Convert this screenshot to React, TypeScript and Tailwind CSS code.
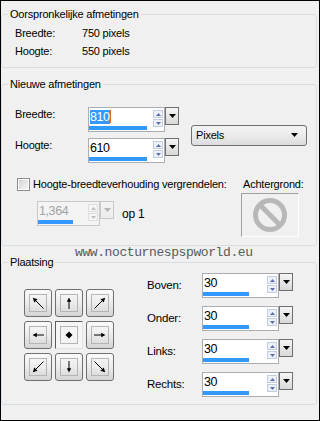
import type { ReactNode } from 'react';

function Tri({ up, color }: { up?: boolean; color: string }) {
  return (
    <svg width="5" height="3" viewBox="0 0 5 3">
      <path d={up ? 'M2.5 0L5 3H0Z' : 'M0 0H5L2.5 3Z'} fill={color} />
    </svg>
  );
}

function DropBtn({ disabled }: { disabled?: boolean }) {
  return (
    <div
      className={`flex h-[18px] w-[14px] items-center justify-center border bg-linear-to-b ${
        disabled ? 'border-[#c9c9c9] from-[#f4f4f4] to-[#ececec]' : 'border-[#6f6f6f] from-[#f6f6f6] to-[#d8d8d8]'
      }`}
    >
      <svg width="7" height="4" viewBox="0 0 7 4">
        <path d="M0 0H7L3.5 4Z" fill={disabled ? '#b5b5b5' : '#000'} />
      </svg>
    </div>
  );
}

function SpinBox({
  value,
  bar,
  w = 'w-[77px]',
  selected,
  disabled,
}: {
  value: string;
  bar: number;
  w?: string;
  selected?: boolean;
  disabled?: boolean;
}) {
  const arrow = disabled ? 'border-[#dedede] bg-[#f6f6f6]' : 'border-[#c3cde0] bg-[#eef1f8]';
  const tri = disabled ? '#c0c0c0' : '#5a6fae';
  return (
    <div className="flex items-start">
      <div className={`flex h-[25px] ${w} border ${disabled ? 'border-[#c9c9c9] bg-[#f4f4f4]' : 'border-[#abadb3] bg-white'}`}>
        <div className="flex flex-1 flex-col">
          <div className={`flex-1 pl-[1px] pt-[2px] text-[12.5px] leading-[14px] tracking-[-0.4px] ${disabled ? 'text-[#a3a3a3]' : 'text-black'}`}>
            {selected ? (
              <>
                <span className="bg-[#3399ff] text-white">{value}</span>
                <span className="inline-block h-[13px] w-[1px] bg-[#e07020] align-top" />
              </>
            ) : (
              value
            )}
          </div>
          <div className="mb-[1px] h-[4px] bg-[#3399ff]" style={{ width: bar }} />
        </div>
        <div className="flex flex-col gap-[1px] pr-[1px] pt-[2px]">
          <div className={`flex h-[8px] w-[10px] items-center justify-center border ${arrow}`}>
            <Tri up color={tri} />
          </div>
          <div className={`flex h-[8px] w-[10px] items-center justify-center border ${arrow}`}>
            <Tri color={tri} />
          </div>
        </div>
      </div>
      <DropBtn disabled={disabled} />
    </div>
  );
}

function Group({ title, className, children }: { title: string; className: string; children: ReactNode }) {
  return (
    <fieldset className={`w-[316px] rounded-[3px] border border-[#d5dfe5] ${className}`}>
      <legend className="ml-[6px] px-[2px] leading-[14px]">{title}</legend>
      {children}
    </fieldset>
  );
}

function Straight() {
  return (
    <svg width="14" height="14" viewBox="0 0 14 14">
      <path d="M7 13V5" stroke="#000" strokeWidth="1" />
      <path d="M7 1.5L4.8 5.8H9.2Z" fill="#000" />
    </svg>
  );
}

function Diagonal() {
  return (
    <svg width="14" height="14" viewBox="0 0 14 14">
      <path d="M12.5 12.5L4.5 4.5" stroke="#000" strokeWidth="1" />
      <path d="M1.8 1.8L6.6 3.3L3.3 6.6Z" fill="#000" />
    </svg>
  );
}

function DirBtn({ icon, rot }: { icon: 'straight' | 'diag'; rot: string }) {
  return (
    <div className="flex h-[28px] w-[28px] items-center justify-center rounded-[3px] border border-[#707070] bg-linear-to-b from-[#fbfbfb] via-[#ececec] to-[#d4d4d4]">
      <div className="flex h-[18px] w-[18px] items-center justify-center border border-[#b5b5b5]">
        <div className={rot}>{icon === 'straight' ? <Straight /> : <Diagonal />}</div>
      </div>
    </div>
  );
}

export default function App() {
  return (
    <div className="relative h-[421px] w-[320px] overflow-hidden border border-black bg-[#f0f0f0] font-['Liberation_Sans',Arial,sans-serif] text-[11px] tracking-[-0.2px] text-black">
      <Group title="Oorspronkelijke afmetingen" className="mt-[6px]">
        <div className="pb-[7px] pl-[13px] pt-[3px]">
          <div className="flex h-[18px] items-center">
            <span className="w-[67px]">Breedte:</span>
            <span>750 pixels</span>
          </div>
          <div className="flex h-[18px] items-center">
            <span className="w-[67px]">Hoogte:</span>
            <span>550 pixels</span>
          </div>
        </div>
      </Group>

      <Group title="Nieuwe afmetingen" className="mt-[9px]">
        <div className="pb-[8px]">
          <div className="mt-[16px] flex items-center">
            <div className="flex w-[189px] flex-col gap-[6px] pl-[13px]">
              <div className="flex items-start">
                <span className="w-[73px] leading-[14px]">Breedte:</span>
                <SpinBox value="810" bar={58} selected />
              </div>
              <div className="flex items-start">
                <span className="w-[73px] leading-[14px]">Hoogte:</span>
                <SpinBox value="610" bar={58} />
              </div>
            </div>
            <div className="flex h-[21px] w-[116px] items-center justify-between rounded-[3px] border border-[#707070] bg-linear-to-b from-[#f4f4f4] via-[#ebebeb] to-[#dcdcdc] pl-[4px] pr-[8px]">
              <span>Pixels</span>
              <svg width="7" height="4" viewBox="0 0 7 4">
                <path d="M0 0H7L3.5 4Z" fill="#000" />
              </svg>
            </div>
          </div>

          <div className="mt-[14px] flex h-[14px] items-center whitespace-nowrap">
            <div className="flex w-[241px] items-center pl-[15px]">
              <div className="h-[13px] w-[13px] border border-[#8e8f8f] bg-white p-[1px]">
                <div className="h-full w-full bg-linear-to-br from-[#d4d4d4] to-[#f6f6f6]" />
              </div>
              <span className="ml-[3px]">Hoogte-breedteverhouding vergrendelen:</span>
            </div>
            <span>Achtergrond:</span>
          </div>

          <div className="mt-[2px] flex items-start">
            <div className="flex w-[239px] items-center pl-[35px] pt-[8px]">
              <SpinBox value="1,364" bar={35} w="w-[63px]" disabled />
              <span className="ml-[8px] text-[12px]">op 1</span>
            </div>
            <div className="flex h-[44px] w-[58px] items-center justify-center border border-b-white border-l-[#a0a0a0] border-r-white border-t-[#a0a0a0]">
              <svg width="40" height="40" viewBox="0 0 40 40">
                <circle cx="20" cy="20" r="14.5" fill="none" stroke="#b8b8b8" strokeWidth="5" />
                <path d="M9.8 9.8L30.2 30.2" stroke="#b8b8b8" strokeWidth="5" />
              </svg>
            </div>
          </div>
        </div>
      </Group>

      <Group title="Plaatsing" className="mt-[9px]">
        <div className="flex items-start pb-[7px]">
          <div className="ml-[22px] mt-[20px] grid grid-cols-3 gap-x-[3px] gap-y-[4px]">
            <DirBtn icon="diag" rot="" />
            <DirBtn icon="straight" rot="" />
            <DirBtn icon="diag" rot="rotate-90" />
            <DirBtn icon="straight" rot="-rotate-90" />
            <div className="flex h-[28px] w-[28px] items-center justify-center border border-b-[#e3e3e3] border-l-[#5c5c5c] border-r-[#e3e3e3] border-t-[#5c5c5c] bg-[#f5f5f5]">
              <div className="flex h-[18px] w-[18px] items-center justify-center border border-[#b5b5b5]">
                <svg width="8" height="8" viewBox="0 0 8 8">
                  <path d="M4 0.5L7.5 4L4 7.5L0.5 4Z" fill="#000" />
                </svg>
              </div>
            </div>
            <DirBtn icon="straight" rot="rotate-90" />
            <DirBtn icon="diag" rot="-rotate-90" />
            <DirBtn icon="straight" rot="rotate-180" />
            <DirBtn icon="diag" rot="rotate-180" />
          </div>

          <div className="ml-[33px] mt-[4px] flex flex-col gap-[8px]">
            {['Boven:', 'Onder:', 'Links:', 'Rechts:'].map((l) => (
              <div key={l} className="flex items-center">
                <span className="w-[55px] text-[11.5px]">{l}</span>
                <SpinBox value="30" bar={46} />
              </div>
            ))}
          </div>
        </div>
      </Group>

      <div className="absolute left-[74px] top-[245px] font-['Liberation_Mono',monospace] text-[13px] leading-[13px] tracking-[-0.4px] text-[#5a5a5a]">
        www.nocturnespspworld.eu
      </div>
    </div>
  );
}
